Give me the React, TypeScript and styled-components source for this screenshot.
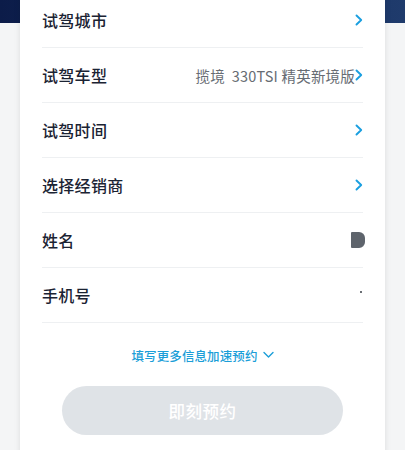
import React from "react";
import styled, { createGlobalStyle } from "styled-components";

const Global = createGlobalStyle`
  html, body { margin: 0; padding: 0; background: #f4f5f6; }
  body { font-family: "Noto Sans CJK SC", "Noto Sans", sans-serif; overflow: hidden; }
`;

const Page = styled.div`
  width: 405px;
  height: 450px;
  overflow: hidden;
  background: #f4f5f6;
`;

const HeaderBand = styled.div`
  height: 23px;
  background: linear-gradient(90deg, #0c1c49 0%, #163063 60%, #1f3b6c 100%);
`;

const Card = styled.div`
  margin: -30px 20px 0;
  background: #ffffff;
  box-shadow: 0 0 6px rgba(0, 0, 0, 0.1);
  padding: 0 22px 40px;
  position: relative;
`;

const Row = styled.div`
  height: 54px;
  display: flex;
  align-items: center;
  border-bottom: 1px solid #eef0f2;
`;

const Label = styled.div`
  font-size: 16px;
  font-weight: 500;
  color: #1b2333;
  flex: 1;
  letter-spacing: 0.3px;
`;

const Value = styled.div`
  font-size: 14.5px;
  color: #676c73;
  white-space: pre;
  letter-spacing: 0.2px;
`;

const Chevron = styled.svg`
  width: 8px;
  height: 12px;
  flex: none;
`;

const Blob = styled.div`
  width: 14px;
  height: 16px;
  background: #5e646c;
  border-radius: 1px 6px 6px 1px;
  margin-right: -2px;
`;

const Dot = styled.div`
  width: 2px;
  height: 2px;
  background: #6b6f75;
  margin-right: 1px;
  margin-top: -6px;
`;

const MoreLink = styled.div`
  margin-top: 22px;
  height: 20px;
  display: flex;
  align-items: center;
  justify-content: center;
  gap: 5px;
  font-size: 12.5px;
  font-weight: 500;
  color: #1b9ed8;
  letter-spacing: 0.1px;
`;

const SubmitButton = styled.div`
  margin: 21px 20px 0;
  height: 49px;
  border-radius: 25px;
  background: #dfe3e7;
  color: #ffffff;
  display: flex;
  align-items: center;
  justify-content: center;
  font-size: 16.5px;
  font-weight: 500;
  letter-spacing: 0.5px;
`;

const RightArrow = () => (
  <Chevron viewBox="0 0 8 12">
    <polyline
      points="1.5,1.5 6.2,6 1.5,10.5"
      fill="none"
      stroke="#1a9fe0"
      strokeWidth="1.9"
      strokeLinecap="round"
      strokeLinejoin="round"
    />
  </Chevron>
);

const DownArrow = () => (
  <svg width="11" height="8" viewBox="0 0 11 8">
    <polyline
      points="1,1.5 5.5,6 10,1.5"
      fill="none"
      stroke="#1b9ed8"
      strokeWidth="1.4"
      strokeLinecap="round"
      strokeLinejoin="round"
    />
  </svg>
);

export default function App() {
  return (
    <Page>
      <Global />
      <HeaderBand />
      <Card>
        <Row>
          <Label>试驾城市</Label>
          <RightArrow />
        </Row>
        <Row>
          <Label>试驾车型</Label>
          <Value>{"揽境  330TSI 精英新境版"}</Value>
          <RightArrow />
        </Row>
        <Row>
          <Label>试驾时间</Label>
          <RightArrow />
        </Row>
        <Row>
          <Label>选择经销商</Label>
          <RightArrow />
        </Row>
        <Row>
          <Label>姓名</Label>
          <Blob />
        </Row>
        <Row>
          <Label>手机号</Label>
          <Dot />
        </Row>
        <MoreLink>
          填写更多信息加速预约
          <DownArrow />
        </MoreLink>
        <SubmitButton>即刻预约</SubmitButton>
      </Card>
    </Page>
  );
}
